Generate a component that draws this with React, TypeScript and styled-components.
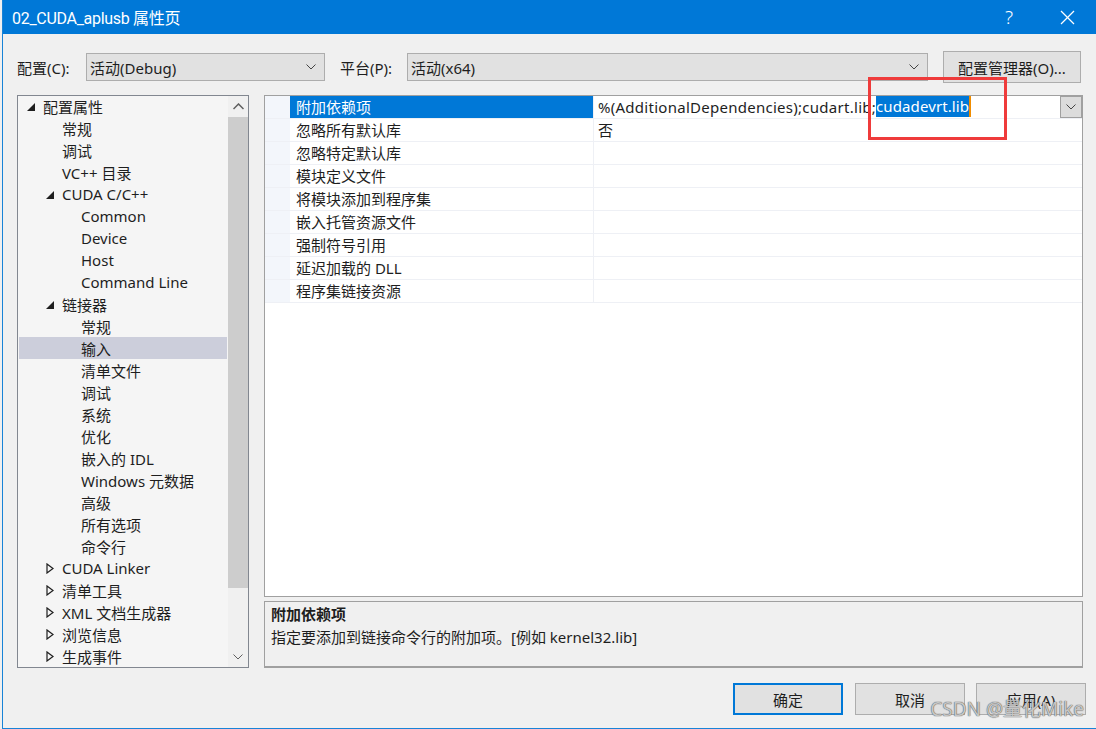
import React from "react";
import styled, { createGlobalStyle } from "styled-components";

const GlobalStyle = createGlobalStyle`
  html, body {
    margin: 0;
    padding: 0;
    background: #f0f0f0;
  }
  body {
    font-family: "Noto Sans", "Noto Sans CJK SC", sans-serif;
    color: #1e1e1e;
  }
`;

type TreeItem = {
  label: string;
  level: number;
  expander?: "open" | "closed";
  selected?: boolean;
};

const treeItems: TreeItem[] = [
  { label: "配置属性", level: 0, expander: "open" },
  { label: "常规", level: 1 },
  { label: "调试", level: 1 },
  { label: "VC++ 目录", level: 1 },
  { label: "CUDA C/C++", level: 1, expander: "open" },
  { label: "Common", level: 2 },
  { label: "Device", level: 2 },
  { label: "Host", level: 2 },
  { label: "Command Line", level: 2 },
  { label: "链接器", level: 1, expander: "open" },
  { label: "常规", level: 2 },
  { label: "输入", level: 2, selected: true },
  { label: "清单文件", level: 2 },
  { label: "调试", level: 2 },
  { label: "系统", level: 2 },
  { label: "优化", level: 2 },
  { label: "嵌入的 IDL", level: 2 },
  { label: "Windows 元数据", level: 2 },
  { label: "高级", level: 2 },
  { label: "所有选项", level: 2 },
  { label: "命令行", level: 2 },
  { label: "CUDA Linker", level: 1, expander: "closed" },
  { label: "清单工具", level: 1, expander: "closed" },
  { label: "XML 文档生成器", level: 1, expander: "closed" },
  { label: "浏览信息", level: 1, expander: "closed" },
  { label: "生成事件", level: 1, expander: "closed" },
];

const properties = [
  "附加依赖项",
  "忽略所有默认库",
  "忽略特定默认库",
  "模块定义文件",
  "将模块添加到程序集",
  "嵌入托管资源文件",
  "强制符号引用",
  "延迟加载的 DLL",
  "程序集链接资源",
];

const Page = styled.div`
  padding-left: 2px;
`;

const Window = styled.div`
  position: relative;
  width: 1093px;
  height: 728px;
  background: #f0f0f0;
  border-left: 1px solid #1883d7;
  border-bottom: 1px solid #1883d7;
  display: flex;
  flex-direction: column;
  overflow: hidden;
`;

const TitleBar = styled.div`
  height: 34px;
  margin-left: -3px;
  background: #0078d7;
  color: #fff;
  display: flex;
  align-items: center;
`;

const Title = styled.div`
  flex: 1;
  padding-left: 12px;
  font-family: Roboto, "Noto Sans CJK SC", sans-serif;
  font-size: 16px;
  letter-spacing: -0.3px;
  margin-top: -1px;
`;

const TitleButton = styled.div`
  width: 58px;
  height: 34px;
  display: flex;
  align-items: center;
  justify-content: center;
  font-size: 19px;
  font-weight: 300;
`;

const ConfigRow = styled.div`
  margin-top: 17px;
  height: 32px;
  padding-left: 14px;
  display: flex;
  align-items: center;
  font-size: 15px;
`;

const Label = styled.div<{ $w: number; $ml?: number }>`
  width: ${(p) => p.$w}px;
  margin-left: ${(p) => p.$ml ?? 0}px;
  flex-shrink: 0;
`;

const Select = styled.div<{ $w: number }>`
  width: ${(p) => p.$w}px;
  height: 28px;
  box-sizing: border-box;
  background: #e1e1e1;
  border: 1px solid #adadad;
  display: flex;
  align-items: center;
  padding: 0 8px 0 3px;
  flex-shrink: 0;
  span {
    flex: 1;
  }
`;

const Button = styled.div<{ $w: number; $default?: boolean; $ml?: number }>`
  width: ${(p) => p.$w}px;
  height: 32px;
  margin-left: ${(p) => p.$ml ?? 0}px;
  box-sizing: border-box;
  background: #e1e1e1;
  border: ${(p) => (p.$default ? "2px solid #0078d7" : "1px solid #adadad")};
  display: flex;
  align-items: center;
  justify-content: center;
  font-size: 15px;
  flex-shrink: 0;
`;

const Main = styled.div`
  margin-top: 12px;
  height: 573px;
  padding-left: 14px;
  display: flex;
  gap: 15px;
`;

const Tree = styled.div`
  width: 232px;
  box-sizing: border-box;
  border: 1px solid #828790;
  background: #f5f5f5;
  display: flex;
`;

const TreeList = styled.div`
  flex: 1;
  overflow: hidden;
  padding: 0 1px;
  margin-top: -1px;
`;

const TreeRow = styled.div<{ $level: number; $selected?: boolean }>`
  height: 22px;
  display: flex;
  align-items: center;
  padding-left: ${(p) => 8 + p.$level * 19}px;
  background: ${(p) => (p.$selected ? "#cccedb" : "transparent")};
  font-size: 15px;
  white-space: nowrap;
`;

const Expander = styled.div`
  width: 16px;
  flex-shrink: 0;
  display: flex;
  align-items: center;
  margin-top: 1px;
`;

const ScrollBar = styled.div`
  width: 20px;
  background: #f0f0f0;
  display: flex;
  flex-direction: column;
`;

const ScrollArrow = styled.div`
  height: 21px;
  display: flex;
  align-items: center;
  justify-content: center;
`;

const ScrollThumb = styled.div`
  height: 471px;
  background: #cdcdcd;
`;

const ScrollTrack = styled.div`
  flex: 1;
`;

const RightColumn = styled.div`
  width: 819px;
  display: flex;
  flex-direction: column;
  gap: 4px;
`;

const Grid = styled.div`
  height: 502px;
  box-sizing: border-box;
  border: 1px solid #a0a0a0;
  background: #fff;
  font-size: 15px;
`;

const GridRow = styled.div`
  height: 23px;
  display: flex;
  box-sizing: border-box;
  border-bottom: 1px solid #eef0f5;
`;

const Gutter = styled.div`
  width: 25px;
  background: #f3f6fb;
  flex-shrink: 0;
`;

const NameCell = styled.div<{ $selected?: boolean }>`
  width: 304px;
  flex-shrink: 0;
  box-sizing: border-box;
  padding-left: 6px;
  padding-bottom: 1px;
  display: flex;
  align-items: center;
  background: ${(p) => (p.$selected ? "#0078d7" : "transparent")};
  color: ${(p) => (p.$selected ? "#fff" : "#1e1e1e")};
  border-right: 1px solid #eef0f5;
`;

const ValueCell = styled.div`
  flex: 1;
  display: flex;
  align-items: center;
  padding-left: 4px;
  padding-bottom: 1px;
  white-space: nowrap;
  overflow: hidden;
  letter-spacing: 0.27px;
`;

const Selection = styled.span`
  background: #0078d7;
  color: #fff;
  border-right: 2px solid #f08c00;
  line-height: 21px;
  letter-spacing: 0.1px;
`;

const DropButton = styled.div`
  margin-left: auto;
  width: 22px;
  height: 22px;
  box-sizing: border-box;
  background: #dcdcdc;
  border: 1px solid #a0a0a0;
  display: flex;
  align-items: center;
  justify-content: center;
  flex-shrink: 0;
  align-self: flex-start;
`;

const Description = styled.div`
  height: 67px;
  box-sizing: border-box;
  border: 1px solid #a0a0a0;
  border-bottom-width: 2px;
  padding: 1px 6px;
  font-size: 15px;
  line-height: 23px;
`;

const DescTitle = styled.div`
  font-weight: bold;
`;

const ButtonRow = styled.div`
  display: flex;
  justify-content: flex-end;
  padding-right: 10px;
  margin-top: 15px;
`;

const Annotation = styled.div`
  position: absolute;
  left: 865px;
  top: 77px;
  width: 139px;
  height: 63px;
  box-sizing: border-box;
  border: 3px solid #ef3b3b;
  pointer-events: none;
`;

const Watermark = styled.div`
  position: absolute;
  right: 12px;
  bottom: 6px;
  font-size: 19px;
  color: rgba(235, 235, 235, 0.75);
  text-shadow: 0 0 1px #555, 0 0 1px #555;
  pointer-events: none;
`;

const Chevron = ({ color = "#444" }: { color?: string }) => (
  <svg width="10" height="6" viewBox="0 0 10 6">
    <polyline points="0.5,0.5 5,5 9.5,0.5" fill="none" stroke={color} strokeWidth="1" />
  </svg>
);

const ChevronUp = () => (
  <svg width="11" height="7" viewBox="0 0 11 7">
    <polyline points="0.5,6 5.5,1 10.5,6" fill="none" stroke="#606060" strokeWidth="1.5" />
  </svg>
);

const OpenTriangle = () => (
  <svg width="8" height="8" viewBox="0 0 8 8">
    <polygon points="8,0 8,8 0,8" fill="#1e1e1e" />
  </svg>
);

const ClosedTriangle = () => (
  <svg width="8" height="11" viewBox="0 0 8 11">
    <polygon points="1,1 7,5.5 1,10" fill="none" stroke="#1e1e1e" strokeWidth="1.2" />
  </svg>
);

const CloseIcon = () => (
  <svg width="15" height="15" viewBox="0 0 15 15">
    <line x1="1" y1="1" x2="14" y2="14" stroke="#fff" strokeWidth="1.2" />
    <line x1="14" y1="1" x2="1" y2="14" stroke="#fff" strokeWidth="1.2" />
  </svg>
);

export default function App() {
  return (
    <Page>
      <GlobalStyle />
      <Window>
        <TitleBar>
          <Title>02_CUDA_aplusb 属性页</Title>
          <TitleButton>?</TitleButton>
          <TitleButton>
            <CloseIcon />
          </TitleButton>
        </TitleBar>

        <ConfigRow>
          <Label $w={69}>配置(C):</Label>
          <Select $w={239}>
            <span>活动(Debug)</span>
            <Chevron />
          </Select>
          <Label $w={67} $ml={15}>
            平台(P):
          </Label>
          <Select $w={521}>
            <span>活动(x64)</span>
            <Chevron />
          </Select>
          <Button $w={138} $ml={15}>
            配置管理器(O)...
          </Button>
        </ConfigRow>

        <Main>
          <Tree>
            <TreeList>
              {treeItems.map((item, i) => (
                <TreeRow key={i} $level={item.level} $selected={item.selected}>
                  <Expander>
                    {item.expander === "open" && <OpenTriangle />}
                    {item.expander === "closed" && <ClosedTriangle />}
                  </Expander>
                  {item.label}
                </TreeRow>
              ))}
            </TreeList>
            <ScrollBar>
              <ScrollArrow>
                <ChevronUp />
              </ScrollArrow>
              <ScrollThumb />
              <ScrollTrack />
              <ScrollArrow>
                <Chevron color="#606060" />
              </ScrollArrow>
            </ScrollBar>
          </Tree>

          <RightColumn>
            <Grid>
              {properties.map((name, i) => (
                <GridRow key={name}>
                  <Gutter />
                  <NameCell $selected={i === 0}>{name}</NameCell>
                  <ValueCell>
                    {i === 0 && (
                      <>
                        %(AdditionalDependencies);cudart.lib;
                        <Selection>cudadevrt.lib</Selection>
                        <DropButton>
                          <Chevron />
                        </DropButton>
                      </>
                    )}
                    {i === 1 && "否"}
                  </ValueCell>
                </GridRow>
              ))}
            </Grid>
            <Description>
              <DescTitle>附加依赖项</DescTitle>
              <div>指定要添加到链接命令行的附加项。[例如 kernel32.lib]</div>
            </Description>
          </RightColumn>
        </Main>

        <ButtonRow>
          <Button $w={110} $default>
            确定
          </Button>
          <Button $w={110} $ml={12}>
            取消
          </Button>
          <Button $w={110} $ml={11}>
            应用(A)
          </Button>
        </ButtonRow>

        <Annotation />
        <Watermark>CSDN @量化Mike</Watermark>
      </Window>
    </Page>
  );
}
